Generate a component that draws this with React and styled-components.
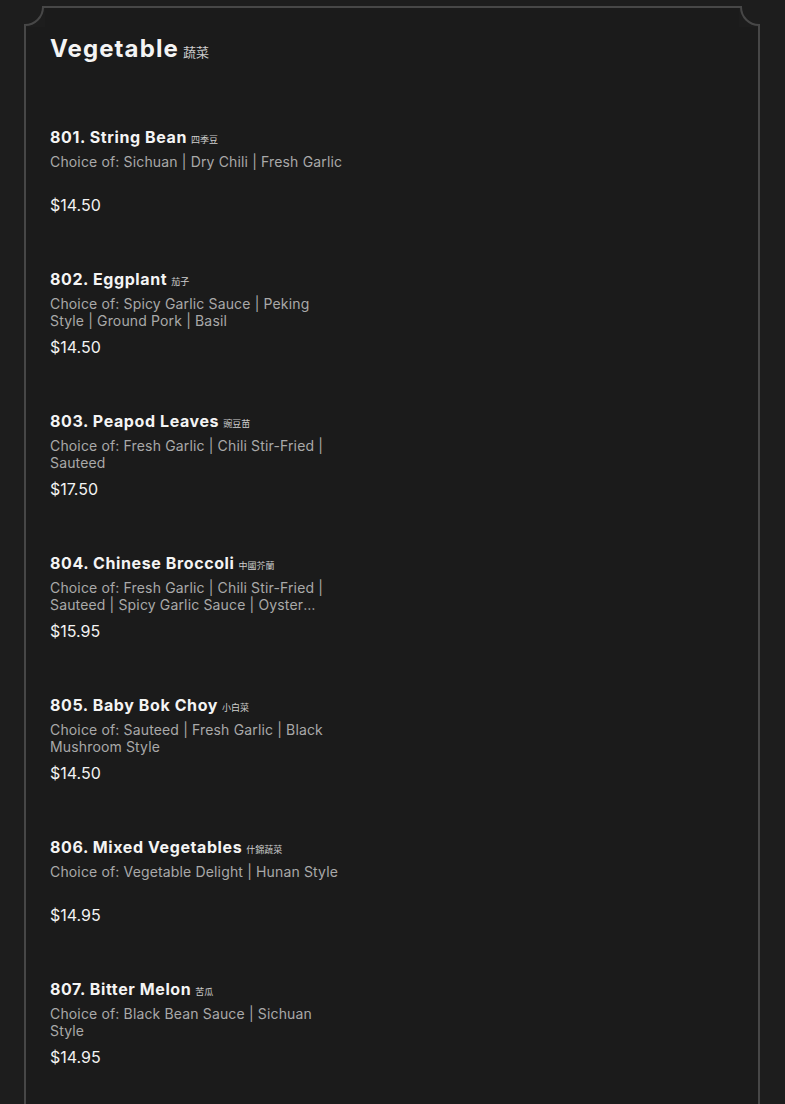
import React from "react";
import styled, { createGlobalStyle } from "styled-components";

const Global = createGlobalStyle`
  html, body { margin: 0; padding: 0; background: #1d1d1d; }
  body { font-family: "Inter", "Noto Sans CJK SC", sans-serif; -webkit-font-smoothing: antialiased; }
`;

const Page = styled.div`
  padding: 6px 25px 0 24px;
  height: 1104px;
  overflow: hidden;
  box-sizing: border-box;
`;

const Card = styled.section`
  position: relative;
  background: #1b1b1b;
  border: 2px solid #474747;
  border-bottom: none;
  min-height: 1200px;
  padding: 26px 24px 0 24px;
`;

const Corner = styled.svg`
  position: absolute;
  top: -2px;
  ${(p) => (p.$right ? "right: -2px; transform: scaleX(-1);" : "left: -2px;")}
  width: 21px;
  height: 21px;
  display: block;
`;

const Title = styled.h2`
  margin: 0;
  font-size: 24px;
  line-height: 30px;
  font-weight: 700;
  color: #f4f4f4;
  letter-spacing: 1.1px;
`;

const Zh = styled.span`
  font-family: "Noto Sans CJK TC", sans-serif;
  font-weight: 400;
  font-size: ${(p) => p.$size || 9}px;
  line-height: 1;
  color: #cfcfcf;
  margin-left: 4px;
  letter-spacing: 0;
`;

const List = styled.div`
  display: flex;
  flex-direction: column;
  gap: 54px;
  margin-top: 63px;
`;

const Item = styled.article`
  display: flex;
  flex-direction: column;
  width: 295px;
`;

const Name = styled.h3`
  margin: 0;
  font-size: 16px;
  line-height: 20px;
  height: 20px;
  font-weight: 700;
  color: #f4f4f4;
  letter-spacing: 0.6px;
  white-space: nowrap;
`;

const Desc = styled.p`
  margin: 6px 0 0;
  font-size: 14px;
  line-height: 17px;
  height: 34px;
  color: #a9a9a9;
  font-weight: 400;
  letter-spacing: 0.15px;
  display: -webkit-box;
  -webkit-line-clamp: 2;
  -webkit-box-orient: vertical;
  overflow: hidden;
`;

const Price = styled.div`
  margin-top: 8px;
  font-size: 16px;
  line-height: 20px;
  color: #f2f2f2;
  font-weight: 400;
`;

const items = [
  { n: "801. String Bean", zh: "四季豆", d: "Choice of: Sichuan | Dry Chili | Fresh Garlic", p: "$14.50" },
  { n: "802. Eggplant", zh: "茄子", d: "Choice of: Spicy Garlic Sauce | Peking Style | Ground Pork | Basil", p: "$14.50" },
  { n: "803. Peapod Leaves", zh: "豌豆苗", d: "Choice of: Fresh Garlic | Chili Stir-Fried | Sauteed", p: "$17.50" },
  { n: "804. Chinese Broccoli", zh: "中國芥蘭", d: "Choice of: Fresh Garlic | Chili Stir-Fried | Sauteed | Spicy Garlic Sauce | Oyster Sauce", p: "$15.95" },
  { n: "805. Baby Bok Choy", zh: "小白菜", d: "Choice of: Sauteed | Fresh Garlic | Black Mushroom Style", p: "$14.50" },
  { n: "806. Mixed Vegetables", zh: "什錦蔬菜", d: "Choice of: Vegetable Delight | Hunan Style", p: "$14.95" },
  { n: "807. Bitter Melon", zh: "苦瓜", d: "Choice of: Black Bean Sauce | Sichuan Style", p: "$14.95" },
];

function CornerArc({ right }) {
  return (
    <Corner $right={right} viewBox="0 0 21 21" aria-hidden="true">
      <rect x="0" y="0" width="21" height="21" fill="#1d1d1d" />
      <path d="M21 1 L19 1 A18 18 0 0 1 1 19 L1 21" fill="none" stroke="#474747" strokeWidth="2" />
    </Corner>
  );
}

export default function App() {
  return (
    <>
      <Global />
      <Page>
        <Card>
          <CornerArc />
          <CornerArc right />
          <Title>
            Vegetable<Zh $size={13}>蔬菜</Zh>
          </Title>
          <List>
            {items.map((it) => (
              <Item key={it.n}>
                <Name>
                  {it.n}
                  <Zh>{it.zh}</Zh>
                </Name>
                <Desc>{it.d}</Desc>
                <Price>{it.p}</Price>
              </Item>
            ))}
          </List>
        </Card>
      </Page>
    </>
  );
}
